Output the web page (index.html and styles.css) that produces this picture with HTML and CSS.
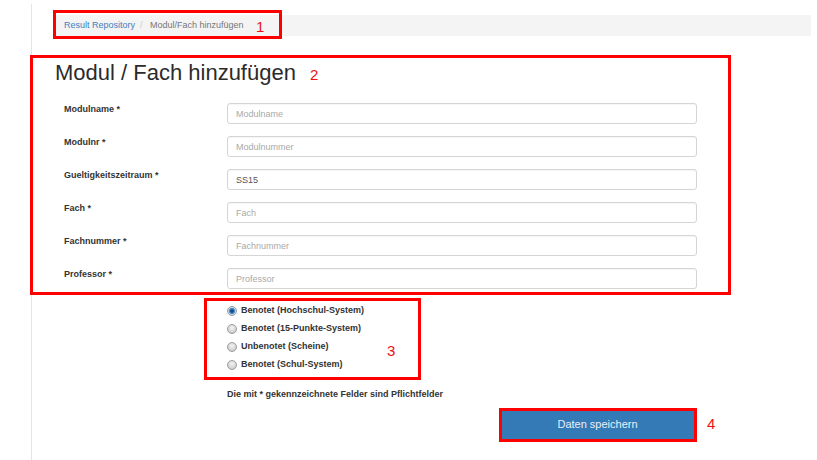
FILE: index.html
```html
<!DOCTYPE html>
<html lang="de">
<head>
<meta charset="utf-8">
<title>Modul / Fach hinzufügen</title>
<link rel="stylesheet" href="styles.css">
</head>
<body>
<div class="page">
  <ol class="breadcrumb">
    <li><a href="#">Result Repository</a></li>
    <li class="active">Modul/Fach hinzufügen</li>
  </ol>
  <h3 class="title">Modul / Fach hinzufügen</h3>
  <form class="form">
    <div class="fields">
      <label class="lbl">Modulname *</label>
      <input class="inp" type="text" placeholder="Modulname">
      <label class="lbl">Modulnr *</label>
      <input class="inp" type="text" placeholder="Modulnummer">
      <label class="lbl">Gueltigkeitszeitraum *</label>
      <input class="inp" type="text" value="SS15">
      <label class="lbl">Fach *</label>
      <input class="inp" type="text" placeholder="Fach">
      <label class="lbl">Fachnummer *</label>
      <input class="inp" type="text" placeholder="Fachnummer">
      <label class="lbl">Professor *</label>
      <input class="inp" type="text" placeholder="Professor">
    </div>
    <div class="radios">
      <label class="radio"><input type="radio" name="art" checked><span>Benotet (Hochschul-System)</span></label>
      <label class="radio"><input type="radio" name="art"><span>Benotet (15-Punkte-System)</span></label>
      <label class="radio"><input type="radio" name="art"><span>Unbenotet (Scheine)</span></label>
      <label class="radio"><input type="radio" name="art"><span>Benotet (Schul-System)</span></label>
    </div>
    <p class="hint">Die mit * gekennzeichnete Felder sind Pflichtfelder</p>
    <button type="button" class="btn">Daten speichern</button>
  </form>
</div>

<div class="mark mark-1"></div>
<div class="mark mark-2"></div>
<div class="mark mark-3"></div>
<div class="mark mark-4"></div>
<span class="num num-1">1</span>
<span class="num num-2">2</span>
<span class="num num-3">3</span>
<span class="num num-4">4</span>
</body>
</html>
```

FILE: styles.css
```css
html, body {
  margin: 0;
  padding: 0;
  background: #ffffff;
}

body {
  position: relative;
  width: 817px;
  height: 460px;
  overflow: hidden;
  font-family: "Liberation Sans", Arial, Helvetica, sans-serif;
  font-size: 9px;
  color: #333333;
}

.page {
  margin: 4px 0 0 31px;
  border-left: 1px solid #e4e4e4;
  height: 456px;
  padding: 11px 6px 0 23px;
  box-sizing: border-box;
}

.breadcrumb {
  list-style: none;
  margin: 0;
  padding: 0 0 0 9px;
  height: 21px;
  line-height: 21px;
  background: #f4f4f4;
  display: flex;
  font-size: 9px;
}

.breadcrumb li + li::before {
  content: "/\00a0";
  padding: 0 5px;
  color: #cccccc;
}

.breadcrumb a {
  color: #3f80c0;
  text-decoration: none;
}

.breadcrumb .active {
  color: #777777;
}

.title {
  margin: 24px 0 0 0;
  font-size: 22px;
  line-height: 26px;
  font-weight: normal;
  color: #2b2b2b;
}

.form {
  margin: 17px 0 0 0;
  padding-left: 9px;
}

.fields {
  display: grid;
  grid-template-columns: 163px 470px;
  row-gap: 12px;
}

.lbl {
  font-weight: bold;
  font-size: 9px;
  line-height: 13px;
  color: #333333;
}

.inp {
  height: 21px;
  box-sizing: border-box;
  border: 1px solid #d5d5d5;
  border-radius: 3px;
  padding: 0 8px;
  font-family: "Liberation Sans", Arial, sans-serif;
  font-size: 9px;
  color: #555555;
  background: #ffffff;
  box-shadow: inset 0 1px 1px rgba(0,0,0,0.04);
  outline: none;
}

.inp::placeholder {
  color: #a9a9a9;
}

.radios {
  margin: 12px 0 0 163px;
  display: flex;
  flex-direction: column;
}

.radio {
  display: flex;
  align-items: center;
  height: 18px;
  font-weight: bold;
  font-size: 9px;
  color: #333333;
}

.radio input {
  appearance: none;
  -webkit-appearance: none;
  width: 10px;
  height: 10px;
  margin: 2px 4px 0 0;
  border-radius: 50%;
  border: 1px solid #9c9c9c;
  background: radial-gradient(circle at 50% 35%, #f4f4f4 0, #d8d8d8 55%, #bdbdbd 100%);
  box-sizing: border-box;
}

.radio input:checked {
  background: radial-gradient(circle, #0d3f73 0, #1f5f9e 1.6px, #5c9ad6 2.8px, #cfdbe6 3.6px, #d6d6d6 100%);
}

.hint {
  margin: 15px 0 0 163px;
  font-weight: bold;
  font-size: 9px;
  line-height: 13px;
  color: #333333;
}

.btn {
  display: block;
  margin: 7px 0 0 436px;
  width: 195px;
  height: 32px;
  border: none;
  border-radius: 3px;
  background: #337ab7;
  color: #e9f0f7;
  font-family: "Liberation Sans", Arial, sans-serif;
  font-size: 11px;
}

/* annotation overlay */
.mark {
  position: absolute;
  border: 3px solid #ff0000;
  box-sizing: border-box;
}

.mark-1 { left: 53px; top: 10px; width: 229px; height: 29px; }
.mark-2 { left: 30px; top: 55px; width: 701px; height: 240px; }
.mark-3 { left: 204px; top: 298px; width: 217px; height: 82px; }
.mark-4 { left: 499px; top: 408px; width: 198px; height: 34px; }

.num {
  position: absolute;
  font-family: "Liberation Sans", Arial, sans-serif;
  font-size: 15px;
  line-height: 15px;
  color: #ee1111;
}

.num-1 { left: 256px; top: 19px; }
.num-2 { left: 310px; top: 67px; }
.num-3 { left: 387px; top: 343px; }
.num-4 { left: 707px; top: 416px; }
```
